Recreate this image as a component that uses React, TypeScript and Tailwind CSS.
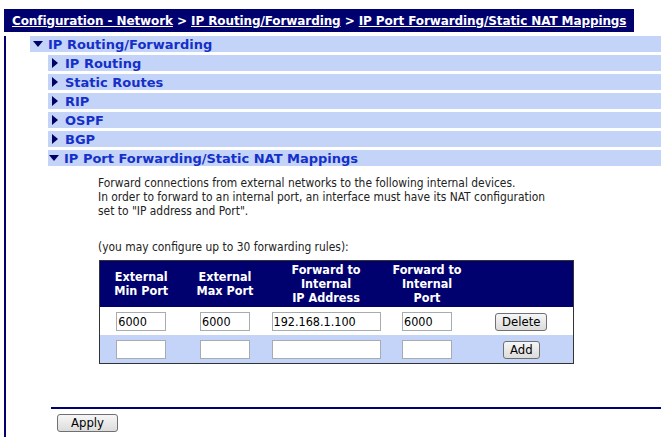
import React from "react";

const navy = "bg-[#00006e]";

const sections = ["IP Routing", "Static Routes", "RIP", "OSPF", "BGP"];

const TriRight = () => (
  <svg width="6" height="10" viewBox="0 0 6 10" className="shrink-0">
    <path d="M0 0 L6 5 L0 10 Z" fill="#000066" />
  </svg>
);

const TriDown = () => (
  <svg width="10" height="6" viewBox="0 0 10 6" className="shrink-0">
    <path d="M0 0 L10 0 L5 6 Z" fill="#000066" />
  </svg>
);

const Btn = ({ label, w }: { label: string; w: string }) => (
  <button
    className={`${w} h-[18px] rounded-[3px] border border-[#707070] bg-gradient-to-b from-[#f6f6f6] to-[#dcdcdc] font-['DejaVu_Sans_Condensed',sans-serif] text-[13px] leading-[16px] text-black`}
  >
    {label}
  </button>
);

const Field = ({ w, value }: { w: string; value?: string }) => (
  <input
    readOnly
    value={value ?? ""}
    className={`${w} h-[19px] border border-[#a5acb2] bg-white px-[1px] font-['DejaVu_Sans_Condensed',sans-serif] text-[12.5px] text-black outline-none align-middle`}
  />
);

export default function App() {
  return (
    <div className="w-[661px] h-[437px] overflow-hidden bg-white font-['DejaVu_Sans',sans-serif]">
      <div className={`mt-[9px] ml-[4px] w-[630px] h-[23px] ${navy} pl-[8px] flex items-center`}>
        <span className="text-white font-bold text-[12px] tracking-[-0.1px] whitespace-nowrap">
          <span className="underline">Configuration - Network</span> &gt;{" "}
          <span className="underline">IP Routing/Forwarding</span> &gt;{" "}
          <span className="underline">IP Port Forwarding/Static NAT Mappings</span>
        </span>
      </div>

      <div className="mt-[4px] ml-[4px] border-l-2 border-[#00006e] h-[401px] flex flex-col items-stretch">
        <div className="ml-[24px] h-[16px] bg-[#c4d4f8] flex items-center gap-[5px] pl-[3px]">
          <TriDown />
          <span className="text-[13px] font-bold text-[#1430c8] leading-none">IP Routing/Forwarding</span>
        </div>

        <div className="ml-[42px] mt-[3px] flex flex-col gap-[3px]">
          {sections.map((s) => (
            <div key={s} className="h-[16px] bg-[#c4d4f8] flex items-center gap-[7px] pl-[4px]">
              <TriRight />
              <span className="text-[13px] font-bold text-[#1430c8] leading-none">{s}</span>
            </div>
          ))}
          <div className="h-[16px] bg-[#c4d4f8] flex items-center gap-[5px] pl-[1px]">
            <TriDown />
            <span className="text-[13px] font-bold text-[#1430c8] leading-none">
              IP Port Forwarding/Static NAT Mappings
            </span>
          </div>
        </div>

        <div className="ml-[92px] mt-[10px] font-['DejaVu_Sans_Condensed',sans-serif] text-[11.9px] leading-[14px] text-[#222]">
          <p>Forward connections from external networks to the following internal devices.</p>
          <p>In order to forward to an internal port, an interface must have its NAT configuration</p>
          <p>set to "IP address and Port".</p>
          <p className="mt-[22px]">(you may configure up to 30 forwarding rules):</p>
        </div>

        <table className="self-start ml-[93px] mt-[6px] border border-[#333] border-collapse font-['DejaVu_Sans_Condensed',sans-serif]">
          <thead>
            <tr className={`${navy} h-[46px] text-white font-bold text-[12.5px] leading-[14px] text-center`}>
              <th className="w-[83px] p-0">External<br />Min Port</th>
              <th className="w-[85px] p-0">External<br />Max Port</th>
              <th className="w-[117px] p-0">Forward to<br />Internal<br />IP Address</th>
              <th className="w-[85px] p-0">Forward to<br />Internal<br />Port</th>
              <th className="w-[104px] p-0"></th>
            </tr>
          </thead>
          <tbody>
            <tr className="h-[28px] bg-white text-center">
              <td className="p-0"><Field w="w-[50px]" value="6000" /></td>
              <td className="p-0"><Field w="w-[50px]" value="6000" /></td>
              <td className="p-0"><Field w="w-[109px]" value="192.168.1.100" /></td>
              <td className="p-0"><Field w="w-[50px]" value="6000" /></td>
              <td className="p-0"><Btn label="Delete" w="w-[52px]" /></td>
            </tr>
            <tr className="h-[29px] bg-[#c4d4f8] text-center">
              <td className="p-0"><Field w="w-[50px]" /></td>
              <td className="p-0"><Field w="w-[50px]" /></td>
              <td className="p-0"><Field w="w-[109px]" /></td>
              <td className="p-0"><Field w="w-[50px]" /></td>
              <td className="p-0"><Btn label="Add" w="w-[37px]" /></td>
            </tr>
          </tbody>
        </table>

        <div className="ml-[45px] mt-[43px] h-[2px] bg-[#00006e]" />
        <div className="ml-[51px] mt-[5px] flex">
          <Btn label="Apply" w="w-[61px]" />
        </div>
      </div>
    </div>
  );
}
